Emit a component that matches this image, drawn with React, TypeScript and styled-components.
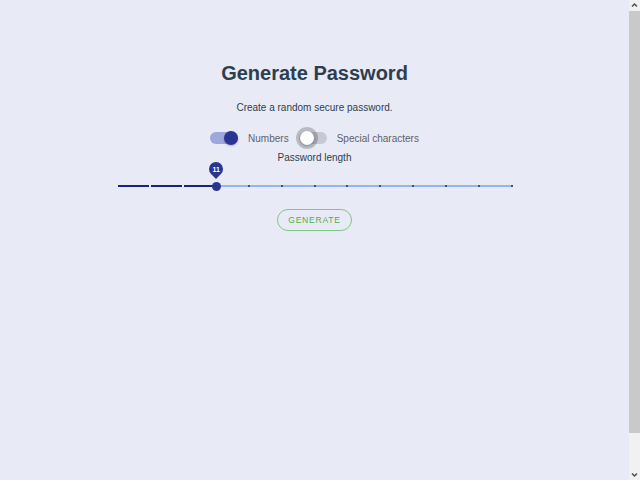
import React from "react";
import styled, { createGlobalStyle } from "styled-components";

const GlobalStyle = createGlobalStyle`
  body {
    margin: 8px;
    background: #e8eaf6;
    font-family: "Liberation Sans", Arial, sans-serif;
  }
`;

const Page = styled.div`
  min-height: 504px;
  padding-right: 11px;
  display: flex;
  flex-direction: column;
  align-items: center;
`;

const Title = styled.h1`
  margin: 54px 0 0;
  font-size: 20px;
  line-height: 23px;
  font-weight: 700;
  color: #2c3e50;
`;

const Subtitle = styled.p`
  margin: 17px 0 0;
  font-size: 10px;
  line-height: 12px;
  color: #2c3e50;
`;

const Options = styled.div`
  margin-top: 13px;
  display: flex;
  align-items: center;
  gap: 10px;
  height: 22px;
`;

const Option = styled.label`
  display: flex;
  align-items: center;
  gap: 10px;
  font-size: 10px;
  color: #5f5f6a;
`;

const Track = styled.span<{ $on: boolean }>`
  position: relative;
  width: 28px;
  height: 12px;
  border-radius: 6px;
  background: ${(p) => (p.$on ? "#9fa8da" : "#c7c8d4")};
`;

const Knob = styled.span<{ $on: boolean }>`
  position: absolute;
  top: -1px;
  left: ${(p) => (p.$on ? "14px" : "1px")};
  width: 14px;
  height: 14px;
  border-radius: 50%;
  background: ${(p) => (p.$on ? "#283593" : "#fff")};
  box-shadow: ${(p) =>
    p.$on ? "0 1px 2px rgba(0,0,0,0.25)" : "0 0 0 4px rgba(0,0,0,0.2), 0 1px 2px rgba(0,0,0,0.3)"};
`;

const Caption = styled.div`
  margin-top: 3px;
  font-size: 10px;
  line-height: 12px;
  color: #2c3e50;
`;

const Slider = styled.div`
  position: relative;
  margin-top: -2px;
  width: 394px;
  height: 30px;
`;

const Rail = styled.div`
  position: absolute;
  left: 0;
  right: 0;
  top: 23px;
  height: 1.5px;
  background: #90b8ef;
`;

const Active = styled.div`
  position: absolute;
  left: 0;
  top: 23px;
  height: 2px;
  background: #1a237e;
`;

const Mark = styled.span<{ $active: boolean }>`
  position: absolute;
  top: 23px;
  width: 2px;
  height: 2px;
  margin-left: -1px;
  background: ${(p) => (p.$active ? "#e8eaf6" : "#4a4f63")};
`;

const Thumb = styled.span`
  position: absolute;
  top: 19.5px;
  width: 9px;
  height: 9px;
  margin-left: -4.5px;
  border-radius: 50%;
  background: #283593;
`;

const Bubble = styled.span`
  position: absolute;
  top: 0px;
  width: 14px;
  height: 14px;
  margin-left: -7px;
  border-radius: 50% 50% 50% 0;
  background: #283593;
  transform: rotate(-45deg);
  display: flex;
  align-items: center;
  justify-content: center;
`;

const BubbleText = styled.span`
  transform: rotate(45deg);
  color: #fff;
  font-size: 7px;
  font-weight: 700;
`;

const Button = styled.button`
  margin-top: 17px;
  width: 75px;
  height: 22px;
  border: 1px solid #7dc882;
  border-radius: 11px;
  background: transparent;
  color: #4caf50;
  font-family: "Liberation Sans", Arial, sans-serif;
  font-size: 8.5px;
  letter-spacing: 0.8px;
  padding: 0;
`;

/* stand-in for the browser scrollbar seen in the screenshot */
const ScrollBar = styled.div`
  position: fixed;
  top: 0;
  right: 0;
  width: 11px;
  height: 100vh;
  background: #f1f1f1;
  display: flex;
  flex-direction: column;
  align-items: center;
`;

const ScrollArrow = styled.svg`
  width: 11px;
  height: 11px;
  flex: none;
`;

const ScrollThumb = styled.div`
  width: 11px;
  height: 422px;
  background: #c9c9c9;
  flex: none;
`;

const Spacer = styled.div`
  flex: 1;
`;

const min = 8;
const max = 20;
const value = 11;

export default function App() {
  const pct = ((value - min) / (max - min)) * 100;
  const marks = Array.from({ length: max - min + 1 }, (_, i) => i);
  return (
    <>
      <GlobalStyle />
      <Page>
        <Title>Generate Password</Title>
        <Subtitle>Create a random secure password.</Subtitle>
        <Options>
          <Option>
            <Track $on>
              <Knob $on />
            </Track>
            Numbers
          </Option>
          <Option>
            <Track $on={false}>
              <Knob $on={false} />
            </Track>
            Special characters
          </Option>
        </Options>
        <Caption>Password length</Caption>
        <Slider>
          <Rail />
          <Active style={{ width: `${pct}%` }} />
          {marks.map((i) =>
            i === 0 || i === value - min ? null : (
              <Mark key={i} $active={i < value - min} style={{ left: `${(i / (max - min)) * 100}%` }} />
            )
          )}
          <Thumb style={{ left: `${pct}%` }} />
          <Bubble style={{ left: `${pct}%` }}>
            <BubbleText>11</BubbleText>
          </Bubble>
        </Slider>
        <Button>GENERATE</Button>
      </Page>
      <ScrollBar>
        <ScrollArrow viewBox="0 0 11 11">
          <path d="M3 6.5 L5.5 4 L8 6.5" fill="none" stroke="#505050" strokeWidth="1.5" />
        </ScrollArrow>
        <ScrollThumb />
        <Spacer />
        <ScrollArrow viewBox="0 0 11 11">
          <path d="M3 4.5 L5.5 7 L8 4.5" fill="none" stroke="#505050" strokeWidth="1.5" />
        </ScrollArrow>
      </ScrollBar>
    </>
  );
}
